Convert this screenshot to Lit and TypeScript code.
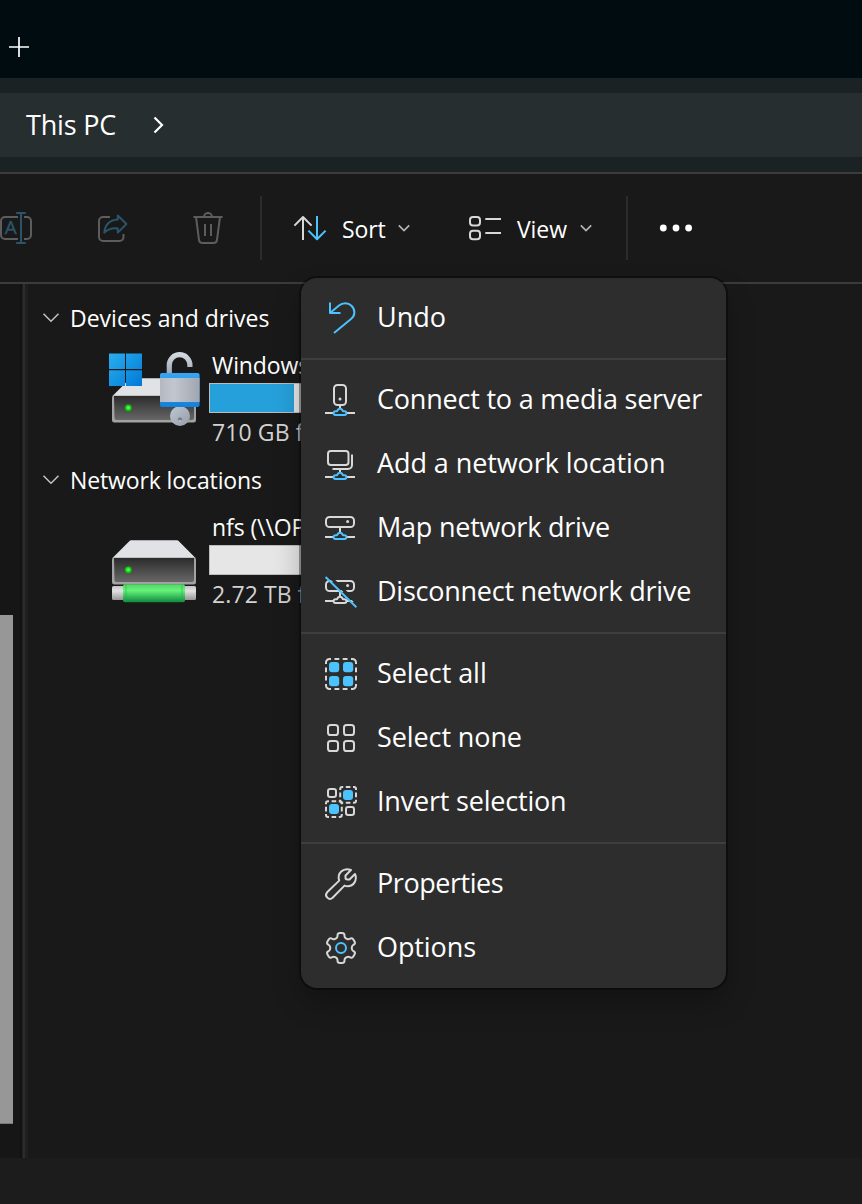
import { LitElement, html, svg, css } from "lit";
import { customElement, property } from "lit/decorators.js";

// Outline of a six-toothed cog centred in a 32px box.
function cogPath(): string {
  const pts: [number, number][] = [];
  for (let i = 0; i < 6; i++) {
    const base = -90 + i * 60;
    for (const [a, r] of [[-19, 11], [-12.5, 15.3], [12.5, 15.3], [19, 11]]) {
      const t = ((base + a) * Math.PI) / 180;
      pts.push([16 + r * Math.cos(t), 16 + r * Math.sin(t)]);
    }
  }
  const n = pts.length;
  const lerp = (p: number[], q: number[], k: number) =>
    `${(p[0] + (q[0] - p[0]) * k).toFixed(2)} ${(p[1] + (q[1] - p[1]) * k).toFixed(2)}`;
  const k = 0.36;
  let d = `M${lerp(pts[0], pts[1], k)}`;
  for (let i = 1; i <= n; i++) {
    const prev = pts[(i - 1) % n];
    const cur = pts[i % n];
    const next = pts[(i + 1) % n];
    d += `L${lerp(cur, prev, k)}Q${cur[0].toFixed(2)} ${cur[1].toFixed(2)} ${lerp(cur, next, k)}`;
  }
  return d + "Z";
}

const netNode = (dy: number, cls: string) => svg`
  <g transform="translate(0 ${dy})">
    <path class="g" d="M0 29H8M22 29H30"/>
    <path class=${cls} d="M10.5 27.2H12L13 25.6Q15 24 17 25.6L18 27.2H19.5a1.9 1.9 0 0 1 0 3.8h-9a1.9 1.9 0 0 1 0-3.8z"/>
  </g>`;

const dashedBox = (x: number, y: number) => svg`
  <path class="g" transform="translate(${x} ${y})"
    d="M1 4V3a2 2 0 0 1 2-2H4M6.6 1H11.2M13.8 1H14.8a2 2 0 0 1 2 2V4M16.8 6.6V11.2M16.8 13.8V14.8a2 2 0 0 1-2 2H13.8M11.2 16.8H6.6M4 16.8H3a2 2 0 0 1-2-2V13.8M1 11.2V6.6"/>`;

const icons: Record<string, unknown> = {
  undo: svg`<path class="b" d="M5 .5V11H15.5M5 11L14 3.6C17.5 .6 23 .4 26.5 3.8C30.6 7.8 30.2 13.6 26 17L9 31"/>`,
  server: svg`<rect class="g" x="9" y="1" width="12" height="20" rx="3.5"/><circle class="gf" cx="15" cy="15" r="1.5"/><path class="g" d="M15 21V24"/>${netNode(0, "b")}`,
  location: svg`<rect class="g" x="3" y="3" width="20.5" height="14" rx="2.8"/><path class="g" d="M27 6.5V17a4 4 0 0 1-4 4H7.5M15 21V24"/>${netNode(0, "b")}`,
  map: svg`<rect class="g" x="1" y="5" width="28" height="10" rx="3.6"/><circle class="gf" cx="22.6" cy="9.6" r="1.5"/><path class="g" d="M15 15V20"/>${netNode(-4, "b")}`,
  disconnect: svg`<rect class="g" x="1" y="5" width="28" height="10" rx="3.6"/><circle class="gf" cx="22.6" cy="9.6" r="1.5"/><path class="g" d="M15 15V20"/>${netNode(-4, "g")}
    <path class="cut" d="M2.6 -1.4L34 29"/><path class="b" d="M.6 1L31.4 31.2"/>`,
  all: svg`<path class="g" d="M1 6V4.5A3.5 3.5 0 0 1 4.5 1H6M9.5 1H14.3M17.7 1H22.5M26 1H27.5A3.5 3.5 0 0 1 31 4.5V6M31 9.5V14.3M31 17.7V22.5M31 26V27.5A3.5 3.5 0 0 1 27.5 31H26M22.5 31H17.7M14.3 31H9.5M6 31H4.5A3.5 3.5 0 0 1 1 27.5V26M1 22.5V17.7M1 14.3V9.5"/>
    ${[[4, 4], [18, 4], [4, 18], [18, 18]].map(([x, y]) => svg`<rect class="bf" x=${x} y=${y} width="10.2" height="10.2" rx="3"/>`)}`,
  none: svg`${[[3, 3], [19, 3], [3, 19], [19, 19]].map(([x, y]) => svg`<rect class="g" x=${x} y=${y} width="10" height="10" rx="2.6"/>`)}`,
  invert: svg`<rect class="g" x="3" y="3" width="8" height="8" rx="2.2"/><rect class="g" x="21" y="21" width="8" height="8" rx="2.2"/>
    ${dashedBox(14.2, 0)}${dashedBox(0, 14.2)}
    <rect class="bf" x="18" y="4" width="10" height="10" rx="3"/><rect class="bf" x="4" y="18" width="10" height="10" rx="3"/>`,
  wrench: svg`<path class="g" d="M26 2L20.5 7.5V9.8Q20.5 11.5 22.2 11.5H24.5L30 6C32.6 12 28.6 18.2 22.6 18.2C21.4 18.2 20.4 18 19.5 17.6L7.6 29.8A3.9 3.9 0 0 1 2.1 24.3L14.2 12.6C11.8 5.6 18 -1 26 2Z"/>`,
  cog: svg`<path class="g" d=${cogPath()}/><circle class="b" cx="16" cy="16" r="5"/>`,
};

interface Entry { icon: string; label: string; track: number }

const menu: Entry[][] = [
  [{ icon: "undo", label: "Undo", track: 0 }],
  [
    { icon: "server", label: "Connect to a media server", track: -0.21 },
    { icon: "location", label: "Add a network location", track: -0.08 },
    { icon: "map", label: "Map network drive", track: -0.22 },
    { icon: "disconnect", label: "Disconnect network drive", track: -0.25 },
  ],
  [
    { icon: "all", label: "Select all", track: -0.05 },
    { icon: "none", label: "Select none", track: -0.1 },
    { icon: "invert", label: "Invert selection", track: -0.2 },
  ],
  [
    { icon: "wrench", label: "Properties", track: -0.45 },
    { icon: "cog", label: "Options", track: -0.1 },
  ],
];

const iconStyles = css`
  svg { display: block; overflow: visible; flex: none; }
  .g, .b, .cut, .dg, .db, .w { fill: none; stroke-width: 2; stroke-linecap: butt; stroke-linejoin: round; }
  .g { stroke: #d8d8d8; }
  .b { stroke: #4cc2ff; }
  .gf { fill: #d8d8d8; }
  .bf { fill: #4cc2ff; }
  .cut { stroke: #2c2c2c; stroke-width: 3; }
  .dg { stroke: #5d5d5d; }
  .db { stroke: #2b546a; }
  .w { stroke: #fff; stroke-width: 1.7; }
`;

@customElement("overflow-menu")
export class OverflowMenu extends LitElement {
  static styles = [iconStyles, css`
    :host {
      display: block; box-sizing: border-box; width: 425px; height: 710px;
      background: #2d2d2d; border-radius: 16px;
      box-shadow: 0 0 0 2px rgba(0, 0, 0, .36), 0 14px 28px rgba(0, 0, 0, .26);
      font-size: 27px; color: #fff;
    }
    .group { padding: 8px 0; }
    .group + .group { border-top: 2px solid #3e3e3e; }
    .item { display: flex; align-items: center; gap: 20px; height: 64px; padding-left: 24px; }
    .label { line-height: 38px; white-space: nowrap; padding-bottom: 2px; }
  `];

  render() {
    return menu.map((group) => html`<div class="group">${group.map((e) => html`
      <div class="item">
        <svg width="32" height="32" viewBox="0 0 32 32">${icons[e.icon]}</svg>
        <span class="label" style="letter-spacing:${e.track}px">${e.label}</span>
      </div>`)}</div>`);
  }
}

@customElement("drive-tile")
export class DriveTile extends LitElement {
  @property() name = "";
  @property() space = "";
  @property({ type: Number }) used = 0;
  @property({ type: Boolean }) network = false;

  static styles = css`
    :host { display: flex; gap: 9px; height: 98px; font-size: 23px; }
    svg { display: block; flex: none; overflow: visible; }
    .info { display: flex; flex-direction: column; width: 400px; }
    .name, .space { flex: none; box-sizing: border-box; height: 33px; line-height: 31px; padding-left: 3px; white-space: nowrap; color: #fff; letter-spacing: -.1px; }
    .space { height: 35px; color: #d2d2d2; padding-top: 4px; letter-spacing: .1px; }
    .bar { flex: none; box-sizing: border-box; height: 30px; border: 1px solid #bcbcbc; background: #e6e6e6; }
    .fill { height: 100%; background: #26a0da; }
  `;

  render() {
    return html`
      <svg width="92" height="98" viewBox="108 350 92 98">
        <defs>
          <linearGradient id="face" x1="0" y1="0" x2="0" y2="1"><stop offset="0" stop-color="#2b2b2b"/><stop offset="1" stop-color="#676767"/></linearGradient>
          <linearGradient id="win" gradientUnits="userSpaceOnUse" x1="109" y1="353" x2="142" y2="386"><stop offset="0" stop-color="#2ab0ee"/><stop offset="1" stop-color="#0078d6"/></linearGradient>
          <linearGradient id="steel" x1="0" y1="0" x2="1" y2="0"><stop offset="0" stop-color="#b4b8bf"/><stop offset=".35" stop-color="#c2c6cf"/><stop offset="1" stop-color="#a0a6b0"/></linearGradient>
          <linearGradient id="band" x1="0" y1="0" x2="0" y2="1"><stop offset="0" stop-color="#38a5f2"/><stop offset="1" stop-color="#1580d8"/></linearGradient>
          <linearGradient id="shackle" x1="0" y1="0" x2="0" y2="1"><stop offset="0" stop-color="#d2d7de"/><stop offset="1" stop-color="#9aa2ae"/></linearGradient>
          <linearGradient id="key" x1="0" y1="0" x2="1" y2="1"><stop offset="0" stop-color="#c0c8d2"/><stop offset="1" stop-color="#949ca8"/></linearGradient>
          <linearGradient id="tube" x1="0" y1="0" x2="0" y2="1"><stop offset="0" stop-color="#4fd764"/><stop offset=".35" stop-color="#66f27a"/><stop offset="1" stop-color="#0e8a3e"/></linearGradient>
          <linearGradient id="cap" x1="0" y1="0" x2="0" y2="1"><stop offset="0" stop-color="#c4c4c4"/><stop offset=".35" stop-color="#e2e2e2"/><stop offset="1" stop-color="#969696"/></linearGradient>
          <radialGradient id="led"><stop offset="0" stop-color="#8cff7c"/><stop offset=".5" stop-color="#26e026"/><stop offset="1" stop-color="#07a007"/></radialGradient>
        </defs>
        <path d="M112.5 396L129.5 379Q130.3 378.3 131 378.3H177Q178 378.3 178.6 379L195.5 396Z" fill="#e1e2e6"/>
        <path d="M113 395.6H195Q196 396.5 196 398V420Q196 422.5 193.5 422.5H114.5Q112 422.5 112 420V398Q112 396.5 113 395.6Z" fill="#a2a2a2"/>
        <path d="M114 396H194V417.5Q194 420 191.5 420H116.5Q114.5 420 114.5 417.5Z" fill="url(#face)"/>
        <circle cx="128.3" cy="407.8" r="3.6" fill="url(#led)"/>
        ${this.network
          ? svg`<rect x="112" y="424" width="84" height="14" rx="1.5" fill="url(#cap)"/>
              <rect x="123" y="422.2" width="62" height="18" rx="2" fill="url(#tube)"/>
              <path d="M126 422.2V440M182 422.2V440" stroke="#2aa850" stroke-opacity=".55"/>`
          : svg`<path d="M109 353.4H125V369H109zM126 353.4H142V369H126zM109 370.2H125V386H109zM126 370.2H142V386H126z" fill="url(#win)"/>
              <path d="M169.3 375V365A10.3 10.3 0 0 1 189.9 365V367" fill="none" stroke="url(#shackle)" stroke-width="5.2"/>
              <circle cx="180" cy="416" r="10" fill="url(#key)"/>
              <circle cx="180" cy="419.3" r="2.1" fill="#777e88"/><path d="M178.3 420.6a2.1 2.1 0 0 0 3.4 0z" fill="#e8e8e8"/>
              <rect x="160" y="373" width="39.6" height="34" rx="2" fill="url(#band)"/>
              <rect x="160" y="378" width="39.6" height="24" fill="url(#steel)"/>`}
      </svg>
      <div class="info">
        <div class="name">${this.name}</div>
        <div class="bar"><div class="fill" style="width:${this.used}%"></div></div>
        <div class="space">${this.space}</div>
      </div>`;
  }
}

@customElement("app-root")
export class AppRoot extends LitElement {
  static styles = [iconStyles, css`
    :host {
      display: flex; flex-direction: column; position: relative; overflow: hidden;
      width: 862px; height: 1204px; background: #191919; color: #fff;
      font-family: "Open Sans", "Noto Sans", sans-serif;
    }
    .tabs { flex: none; height: 78px; box-sizing: border-box; padding: 37px 0 0 9px; background: #000c10; }
    .address { flex: none; box-sizing: border-box; height: 96px; padding-top: 15px; background: #1b2224; border-bottom: 2px solid #3b3c3c; }
    .crumbs { display: flex; align-items: center; gap: 36px; height: 64px; padding-left: 26px; background: #272e30; font-size: 27px; }
    .crumb { width: 91px; white-space: nowrap; line-height: 38px; letter-spacing: -.2px; }
    .toolbar { flex: none; display: flex; align-items: center; box-sizing: border-box; height: 110px; border-bottom: 2px solid #3b3b3b; font-size: 23px; }
    .sep { width: 2px; height: 64px; background: #2c2c2c; }
    .share { margin-left: 63px; }
    .bin { margin-left: 63px; margin-right: 36px; }
    .cmd { display: flex; align-items: center; gap: 16px; margin-left: 32px; }
    .cmd .text { width: 44px; line-height: 32px; padding-top: 2px; letter-spacing: -.1px; }
    .cmd .chev { margin-left: -4px; }
    .view { margin-left: 58px; margin-right: 34px; }
    .view .text { width: 51px; }
    .dots { margin-left: 31px; }
    .body { flex: none; display: flex; height: 874px; }
    .nav { width: 20px; background: #161616; }
    .thumb { width: 13px; height: 508px; margin-top: 331px; background: #979797; border-bottom: 1px solid #7a7a7a; }
    .splitter { width: 8px; background: linear-gradient(90deg, #121212 2px, #202020 2px, #202020 3px, #2c2c2c 3px, #2c2c2c 5px, #1f1f1f 5px); }
    .list { flex: 1; padding-top: 18px; }
    .head { display: flex; align-items: center; gap: 11px; height: 32px; padding-left: 15px; font-size: 23px; white-space: nowrap; }
    drive-tile { margin: 16px 0 16px 80px; }
    .status { flex: 1; background: #1c1c1c; }
    overflow-menu { position: absolute; left: 301px; top: 278px; }
    .at { font-family: "Open Sans", sans-serif; font-size: 19px; fill: #2b546a; stroke: #2b546a; stroke-width: .4; }
  `];

  private chevron = html`<svg class="chev" width="12" height="8" viewBox="0 0 12 8"><path d="M.8 1.3L6 6.5L11.2 1.3" fill="none" stroke="#b4b4b4" stroke-width="1.7"/></svg>`;

  private head(text: string, track: number) {
    return html`<div class="head">
      <svg width="16" height="10" viewBox="0 0 16 10"><path d="M.5 .8L8 8.3L15.5 .8" fill="none" stroke="#c4c4c4" stroke-width="1.5"/></svg>
      <span style="letter-spacing:${track}px">${text}</span>
    </div>`;
  }

  render() {
    return html`
      <div class="tabs"><svg width="20" height="20" viewBox="0 0 20 20"><path class="w" d="M0 10H20M10 0V20"/></svg></div>
      <div class="address"><div class="crumbs">
        <span class="crumb">This PC</span>
        <svg width="12" height="18" viewBox="0 0 12 18"><path d="M1.5 1.5L9 9L1.5 16.5" fill="none" stroke="#fff" stroke-width="2.2"/></svg>
      </div></div>
      <div class="toolbar">
        <svg width="34" height="34" viewBox="0 211 34 34">
          <path class="dg" d="M18 217H5a4 4 0 0 0-4 4V235a4 4 0 0 0 4 4H18M24 217h3a4 4 0 0 1 4 4V235a4 4 0 0 1-4 4H24"/>
          <path class="db" d="M21 213V243M16.2 213H25.8M16.2 243H25.8"/>
          <text class="at" x="4.8" y="233.5">A</text>
        </svg>
        <svg class="share" width="32" height="34" viewBox="97 211 32 34">
          <path class="dg" d="M110 217H103a4 4 0 0 0-4 4V237a4 4 0 0 0 4 4H119.5a4 4 0 0 0 4-4V234"/>
          <path class="db" d="M117.8 215.5L126.4 224L117.8 232.6V228.4C112 227.6 108 229.2 104.3 232.6C105 225 109.5 220 117.8 219.4Z"/>
        </svg>
        <svg class="bin" width="32" height="34" viewBox="192 211 32 34">
          <path class="dg" d="M193.4 217H222.6M204 217A4 4 0 0 1 212 217M196 217L199 239.8Q199.4 243 202.4 243H213.6Q216.6 243 217 239.8L220 217M205 224V236M211 224V236"/>
        </svg>
        <div class="sep"></div>
        <div class="cmd">
          <svg width="32" height="34" viewBox="294 211 32 34">
            <path class="g" d="M303 240V217M294.4 225.6L303 217L311.6 225.6"/>
            <path class="b" d="M317 216V239M308.4 230.6L317 239.2L325.6 230.6"/>
          </svg>
          <span class="text">Sort</span>${this.chevron}
        </div>
        <div class="cmd view">
          <svg width="33" height="34" viewBox="468 211 33 34">
            <rect class="g" x="470" y="217" width="10" height="8.4" rx="3"/><rect class="g" x="470" y="230.8" width="10" height="8.4" rx="3"/>
            <path class="g" d="M485.3 219H501M485.3 233H501"/>
          </svg>
          <span class="text">View</span>${this.chevron}
        </div>
        <div class="sep"></div>
        <svg class="dots" width="34" height="8" viewBox="0 0 34 8"><g fill="#fff"><circle cx="4.3" cy="4" r="3.4"/><circle cx="17" cy="4" r="3.4"/><circle cx="29.6" cy="4" r="3.4"/></g></svg>
      </div>
      <div class="body">
        <div class="nav"><div class="thumb"></div></div>
        <div class="splitter"></div>
        <div class="list">
          ${this.head("Devices and drives", 0)}
          <drive-tile name="Windows (C:)" space="710 GB free" used="21.1"></drive-tile>
          ${this.head("Network locations", -0.12)}
          <drive-tile network name="nfs (\\\\OPEN)" space="2.72 TB free" used="0"></drive-tile>
        </div>
      </div>
      <div class="status"></div>
      <overflow-menu></overflow-menu>`;
  }
}
